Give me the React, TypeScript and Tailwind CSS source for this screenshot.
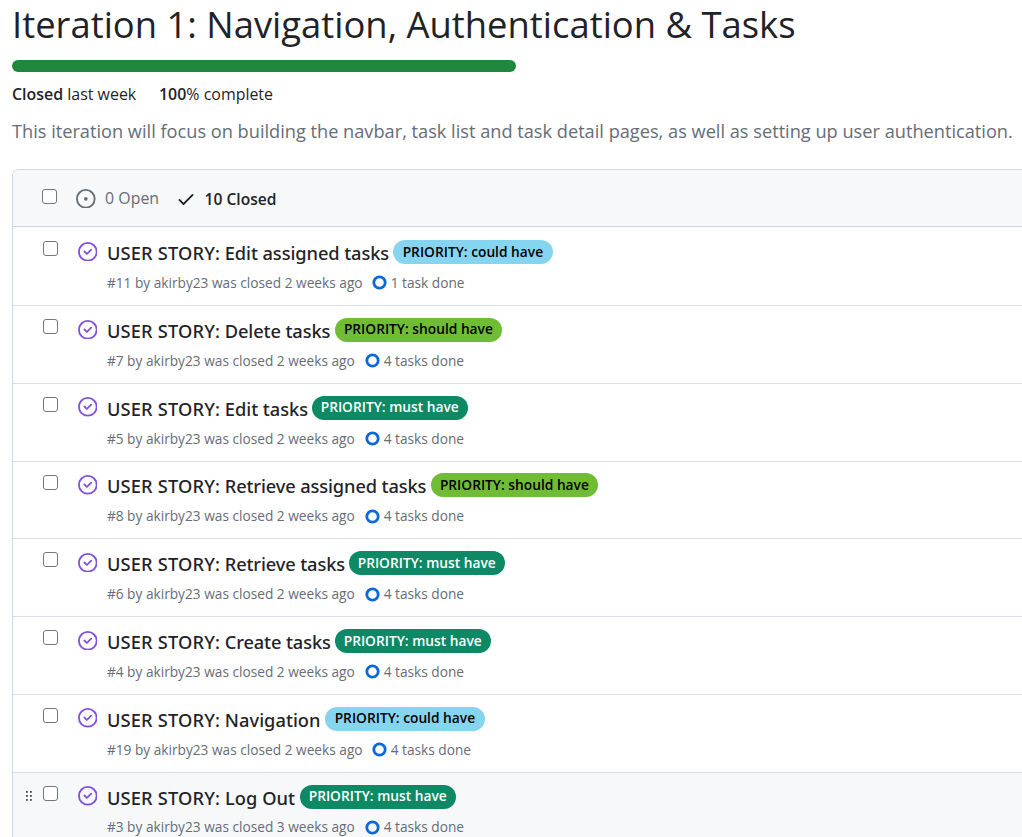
type Priority = "could" | "should" | "must";

interface Issue {
  title: string;
  titleClass: string;
  meta: string;
  metaClass: string;
  tasks: string;
  priority: Priority;
  active?: boolean;
}

const long = "w-[264.8px]";
const short = "w-[257.8px]";

const issues: Issue[] = [
  { title: "Edit assigned tasks", titleClass: "w-[286px] tracking-[-0.08px]", meta: "#11 by akirby23 was closed 2 weeks ago", metaClass: long, tasks: "1 task done", priority: "could" },
  { title: "Delete tasks", titleClass: "w-[228px] tracking-[-0.1px]", meta: "#7 by akirby23 was closed 2 weeks ago", metaClass: short, tasks: "4 tasks done", priority: "should" },
  { title: "Edit tasks", titleClass: "w-[205px] tracking-[-0.03px]", meta: "#5 by akirby23 was closed 2 weeks ago", metaClass: short, tasks: "4 tasks done", priority: "must" },
  { title: "Retrieve assigned tasks", titleClass: "w-[324px] tracking-[-0.12px]", meta: "#8 by akirby23 was closed 2 weeks ago", metaClass: short, tasks: "4 tasks done", priority: "should" },
  { title: "Retrieve tasks", titleClass: "w-[242px] tracking-[-0.12px]", meta: "#6 by akirby23 was closed 2 weeks ago", metaClass: short, tasks: "4 tasks done", priority: "must" },
  { title: "Create tasks", titleClass: "w-[228px] tracking-[-0.12px]", meta: "#4 by akirby23 was closed 2 weeks ago", metaClass: short, tasks: "4 tasks done", priority: "must" },
  { title: "Navigation", titleClass: "w-[218px] tracking-[0.02px]", meta: "#19 by akirby23 was closed 2 weeks ago", metaClass: long, tasks: "4 tasks done", priority: "could" },
  { title: "Log Out", titleClass: "w-[193px] tracking-[0.07px]", meta: "#3 by akirby23 was closed 3 weeks ago", metaClass: short, tasks: "4 tasks done", priority: "must", active: true },
];

const labelClass: Record<Priority, string> = {
  could: "w-[160px] bg-[#85d5f1] text-black",
  should: "w-[167px] bg-[#70bd35] text-black",
  must: "w-[155.7px] bg-[#0d8a65] text-white",
};

function Checkbox() {
  return <span className="block size-[15px] shrink-0 rounded-[3px] border border-[#767676] bg-white" />;
}

function ClosedIcon() {
  return (
    <svg viewBox="0 0 16 16" className="size-[19.6px] shrink-0 fill-[#8250df]">
      <path d="M11.28 6.78a.75.75 0 0 0-1.06-1.06L7.25 8.69 5.78 7.22a.75.75 0 0 0-1.06 1.06l2 2a.75.75 0 0 0 1.06 0l3.5-3.5Z" />
      <path d="M16 8A8 8 0 1 1 0 8a8 8 0 0 1 16 0Zm-1.5 0a6.5 6.5 0 1 0-13 0 6.5 6.5 0 0 0 13 0Z" />
    </svg>
  );
}

function Grip() {
  return (
    <svg viewBox="0 0 6 10" className="mt-[18px] h-[10px] w-[6px] fill-[#424a53]">
      {[0, 4, 8].map((y) => (
        <g key={y}>
          <rect x="0" y={y} width="1.8" height="1.8" />
          <rect x="4" y={y} width="1.8" height="1.8" />
        </g>
      ))}
    </svg>
  );
}

function Row({ issue, first }: { issue: Issue; first: boolean }) {
  return (
    <div
      className={`flex h-[77.77px] shrink-0 items-start border-t ${first ? "border-transparent" : "border-[#d8dee4]"} ${issue.active ? "bg-[#f6f8fa]" : ""}`}
    >
      <div className="flex w-[29.6px] shrink-0 pl-[13px]">{issue.active && <Grip />}</div>
      <div className="pt-[13px]">
        <Checkbox />
      </div>
      <div className="pt-[13.4px] pl-[20px]">
        <ClosedIcon />
      </div>
      <div className="pt-[11.8px] pl-[9.7px]">
        <div className="flex h-[26px] items-start whitespace-nowrap">
          <a className={`block shrink-0 font-['Noto_Sans',sans-serif] text-[18.25px] leading-[26px] font-medium ${issue.titleClass}`}>
            <span className="tracking-[0.17px]">USER STORY:</span> {issue.title}
          </a>
          <span
            className={`flex h-6 shrink-0 items-center justify-center rounded-full pb-px text-[13.75px] leading-6 font-semibold ${labelClass[issue.priority]}`}
          >
            PRIORITY: {issue.priority} have
          </span>
        </div>
        <div className="mt-[6.8px] flex h-[20px] items-center text-[13.7px] leading-[20px] whitespace-nowrap text-[#656d76]">
          <span className={`shrink-0 ${issue.metaClass}`}>{issue.meta}</span>
          <svg viewBox="0 0 15 15" className="mr-[4px] size-[15px]">
            <circle cx="7.5" cy="7.5" r="5.7" fill="none" stroke="#0969da" strokeWidth="2.8" />
          </svg>
          <span>{issue.tasks}</span>
        </div>
      </div>
    </div>
  );
}

export default function App() {
  return (
    <main className="flex h-[837px] flex-col overflow-hidden bg-white pl-3 font-['Open_Sans','Noto_Sans',sans-serif] text-[#1f2328]">
      <h1 className="h-[60px] shrink-0 text-[36.4px] leading-[48px] font-normal whitespace-nowrap">
        Iteration 1: Navigation, Authentication &amp; Tasks
      </h1>
      <div className="h-3 w-[504px] shrink-0 rounded-full bg-[#1f883d]" />
      <div className="mt-[10px] flex h-6 shrink-0 items-center text-[15.95px] leading-6 whitespace-nowrap">
        <div className="w-[147px]">
          <span className="font-semibold">Closed</span> last week
        </div>
        <div>
          <span className="font-semibold">100</span>% complete
        </div>
      </div>
      <p className="mt-[10px] h-[30px] shrink-0 text-[18.19px] leading-[30px] whitespace-nowrap text-[#656d76]">
        This iteration will focus on building the navbar, task list and task detail pages, as well as setting up user authentication.
      </p>
      <section className="mt-[23px] flex min-h-0 flex-1 flex-col overflow-hidden rounded-tl-[7px] border-t border-l border-[#d0d7de]">
        <header className="flex h-[57.4px] shrink-0 items-center border-b border-[#d0d7de] bg-[#f6f8fa] pl-[29px] text-[15.9px] whitespace-nowrap">
          <div className="mb-[2.5px]">
            <Checkbox />
          </div>
          <svg viewBox="0 0 16 16" className="mt-[1px] ml-[19px] size-[19.6px] fill-[#656d76]">
            <path d="M8 9.5a1.5 1.5 0 1 0 0-3 1.5 1.5 0 0 0 0 3Z" />
            <path d="M8 0a8 8 0 1 1 0 16A8 8 0 0 1 8 0ZM1.5 8a6.5 6.5 0 1 0 13 0 6.5 6.5 0 0 0-13 0Z" />
          </svg>
          <span className="mt-[2px] ml-[9.5px] w-[70.5px] text-[15.9px] text-[#656d76]">0 Open</span>
          <svg viewBox="0 0 16 16" className="mt-[1px] size-5 fill-[#1f2328]">
            <path d="M13.78 4.22a.75.75 0 0 1 0 1.06l-7.25 7.25a.75.75 0 0 1-1.06 0L2.22 9.28a.751.751 0 0 1 .018-1.042.751.751 0 0 1 1.042-.018L6 10.94l6.72-6.72a.75.75 0 0 1 1.06 0Z" />
          </svg>
          <span className="mt-[3px] ml-[9px] text-[15.6px] font-semibold">10 Closed</span>
        </header>
        {issues.map((issue, i) => (
          <Row key={issue.title} issue={issue} first={i === 0} />
        ))}
      </section>
    </main>
  );
}
